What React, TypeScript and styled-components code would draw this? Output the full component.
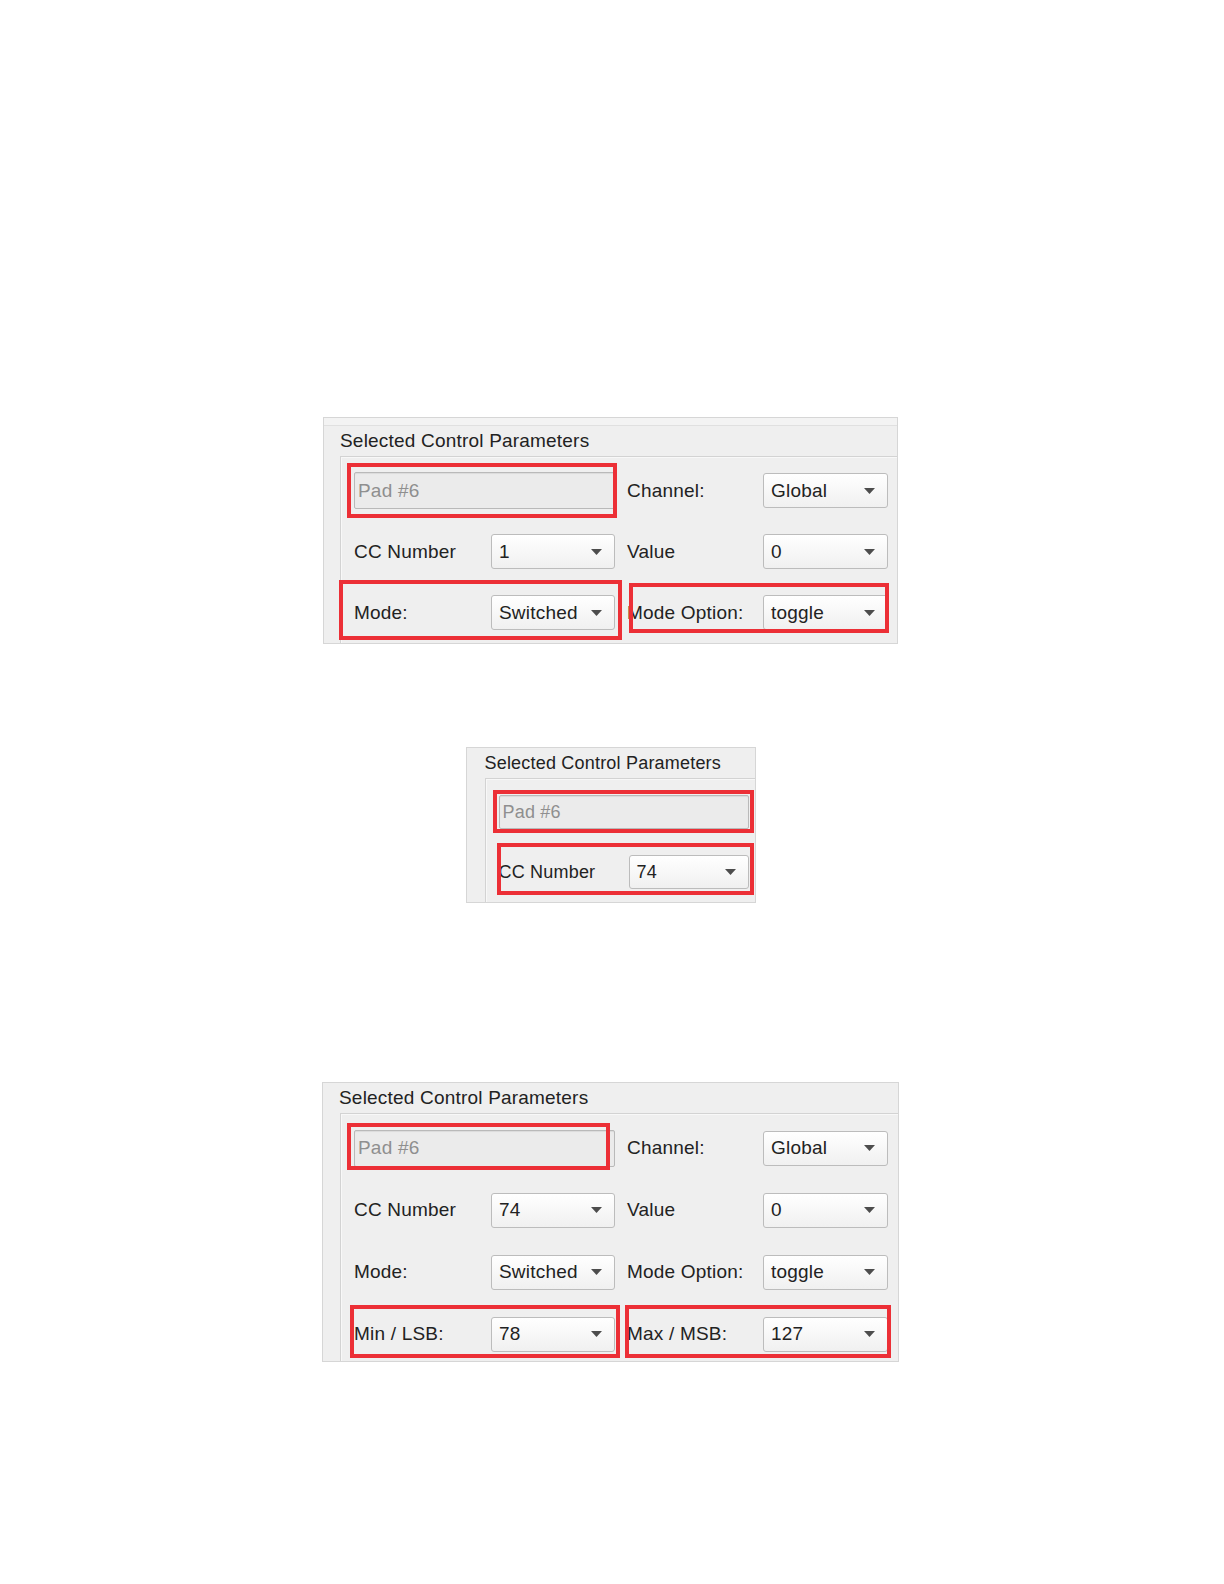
import React from 'react';
import styled, { createGlobalStyle } from 'styled-components';

const GlobalStyle = createGlobalStyle`
  html, body {
    margin: 0;
    padding: 0;
    background: #ffffff;
  }
  body {
    font-family: "Liberation Sans", Arial, sans-serif;
  }
`;

const Page = styled.div`
  display: flex;
  flex-direction: column;
  align-items: center;
  padding: 417px 3px 0 0;
  min-height: 1584px;
  box-sizing: border-box;
`;

const Panel = styled.section<{ $width: number; $gap: number; $height?: number; $fs: number }>`
  position: relative;
  width: ${(p) => p.$width}px;
  ${(p) => (p.$height ? `height: ${p.$height}px; overflow: hidden;` : '')}
  margin-top: ${(p) => p.$gap}px;
  box-sizing: border-box;
  border: 1px solid #d6d6d6;
  background: #efefef;
  font-size: ${(p) => p.$fs}px;
  letter-spacing: 0.2px;
  color: #222222;
`;

const TopEdge = styled.div`
  height: 7px;
  background: #f3f3f3;
  border-bottom: 1px solid #e0e0e0;
`;

const Title = styled.div<{ $inset: number }>`
  height: 30px;
  line-height: 30px;
  padding-left: ${(p) => p.$inset}px;
  white-space: nowrap;
`;

const Group = styled.div<{ $inset: number; $pt: number }>`
  margin-left: ${(p) => p.$inset}px;
  padding: ${(p) => p.$pt}px 0 0 13px;
  border-top: 1px solid #d3d3d3;
  border-left: 1px solid #d3d3d3;
  box-shadow: inset 1px 1px 0 #f8f8f8;
`;

const Grid = styled.div<{ $cols: string; $row: number }>`
  display: grid;
  grid-template-columns: ${(p) => p.$cols};
  grid-auto-rows: ${(p) => p.$row}px;
  column-gap: 12px;
  align-items: center;
`;

const Label = styled.div`
  white-space: nowrap;
`;

const PadField = styled.div<{ $h: number }>`
  grid-column: 1 / span 2;
  height: ${(p) => p.$h}px;
  box-sizing: border-box;
  display: flex;
  align-items: center;
  padding-left: 3px;
  border: 1px solid #b9b9b9;
  border-radius: 2px;
  background: #ebebeb;
  box-shadow: inset 0 1px 1px rgba(0, 0, 0, 0.07);
  color: #8f8f8f;
`;

const SelectBox = styled.div<{ $h: number }>`
  height: ${(p) => p.$h}px;
  box-sizing: border-box;
  display: flex;
  align-items: center;
  justify-content: space-between;
  padding: 0 12px 0 7px;
  border: 1px solid #bcbcbc;
  border-radius: 3px;
  background: linear-gradient(#ffffff, #f0f0f0);
`;

const Highlight = styled.div<{ $top: number; $left: number; $w: number; $h: number }>`
  position: absolute;
  top: ${(p) => p.$top}px;
  left: ${(p) => p.$left}px;
  width: ${(p) => p.$w}px;
  height: ${(p) => p.$h}px;
  box-sizing: border-box;
  border: 4px solid #ec2f36;
  pointer-events: none;
`;

function Select({ value, h = 35 }: { value: string; h?: number }) {
  return (
    <SelectBox $h={h}>
      <span>{value}</span>
      <svg width="11" height="6" viewBox="0 0 11 6">
        <path d="M0 0 L11 0 L5.5 6 Z" fill="#4d4d4d" />
      </svg>
    </SelectBox>
  );
}

const WIDE_COLS = '125px 124px 124px 125px';
const NARROW_COLS = '118px 120px';

function App() {
  return (
    <>
      <GlobalStyle />
      <Page>
        <Panel $width={575} $gap={0} $fs={19}>
          <TopEdge />
          <Title $inset={16}>Selected Control Parameters</Title>
          <Group $inset={16} $pt={3}>
            <Grid $cols={WIDE_COLS} $row={61}>
              <PadField $h={37}>Pad #6</PadField>
              <Label>Channel:</Label>
              <Select value="Global" />
              <Label>CC Number</Label>
              <Select value="1" />
              <Label>Value</Label>
              <Select value="0" />
              <Label>Mode:</Label>
              <Select value="Switched" />
              <Label>Mode Option:</Label>
              <Select value="toggle" />
            </Grid>
          </Group>
          <Highlight $top={45} $left={23} $w={270} $h={55} />
          <Highlight $top={162} $left={15} $w={283} $h={60} />
          <Highlight $top={165} $left={305} $w={260} $h={50} />
        </Panel>

        <Panel $width={290} $gap={103} $fs={18}>
          <Title $inset={18}>Selected Control Parameters</Title>
          <Group $inset={18} $pt={3}>
            <Grid $cols={NARROW_COLS} $row={60}>
              <PadField $h={34}>Pad #6</PadField>
              <Label>CC Number</Label>
              <Select value="74" h={34} />
            </Grid>
          </Group>
          <Highlight $top={42} $left={26} $w={261} $h={43} />
          <Highlight $top={95} $left={30} $w={257} $h={52} />
        </Panel>

        <Panel $width={577} $gap={179} $height={280} $fs={19}>
          <Title $inset={16}>Selected Control Parameters</Title>
          <Group $inset={17} $pt={3}>
            <Grid $cols={WIDE_COLS} $row={62}>
              <PadField $h={37}>Pad #6</PadField>
              <Label>Channel:</Label>
              <Select value="Global" />
              <Label>CC Number</Label>
              <Select value="74" />
              <Label>Value</Label>
              <Select value="0" />
              <Label>Mode:</Label>
              <Select value="Switched" />
              <Label>Mode Option:</Label>
              <Select value="toggle" />
              <Label>Min / LSB:</Label>
              <Select value="78" />
              <Label>Max / MSB:</Label>
              <Select value="127" />
            </Grid>
          </Group>
          <Highlight $top={40} $left={24} $w={263} $h={47} />
          <Highlight $top={222} $left={27} $w={270} $h={53} />
          <Highlight $top={222} $left={302} $w={266} $h={53} />
        </Panel>
      </Page>
    </>
  );
}

export default App;
